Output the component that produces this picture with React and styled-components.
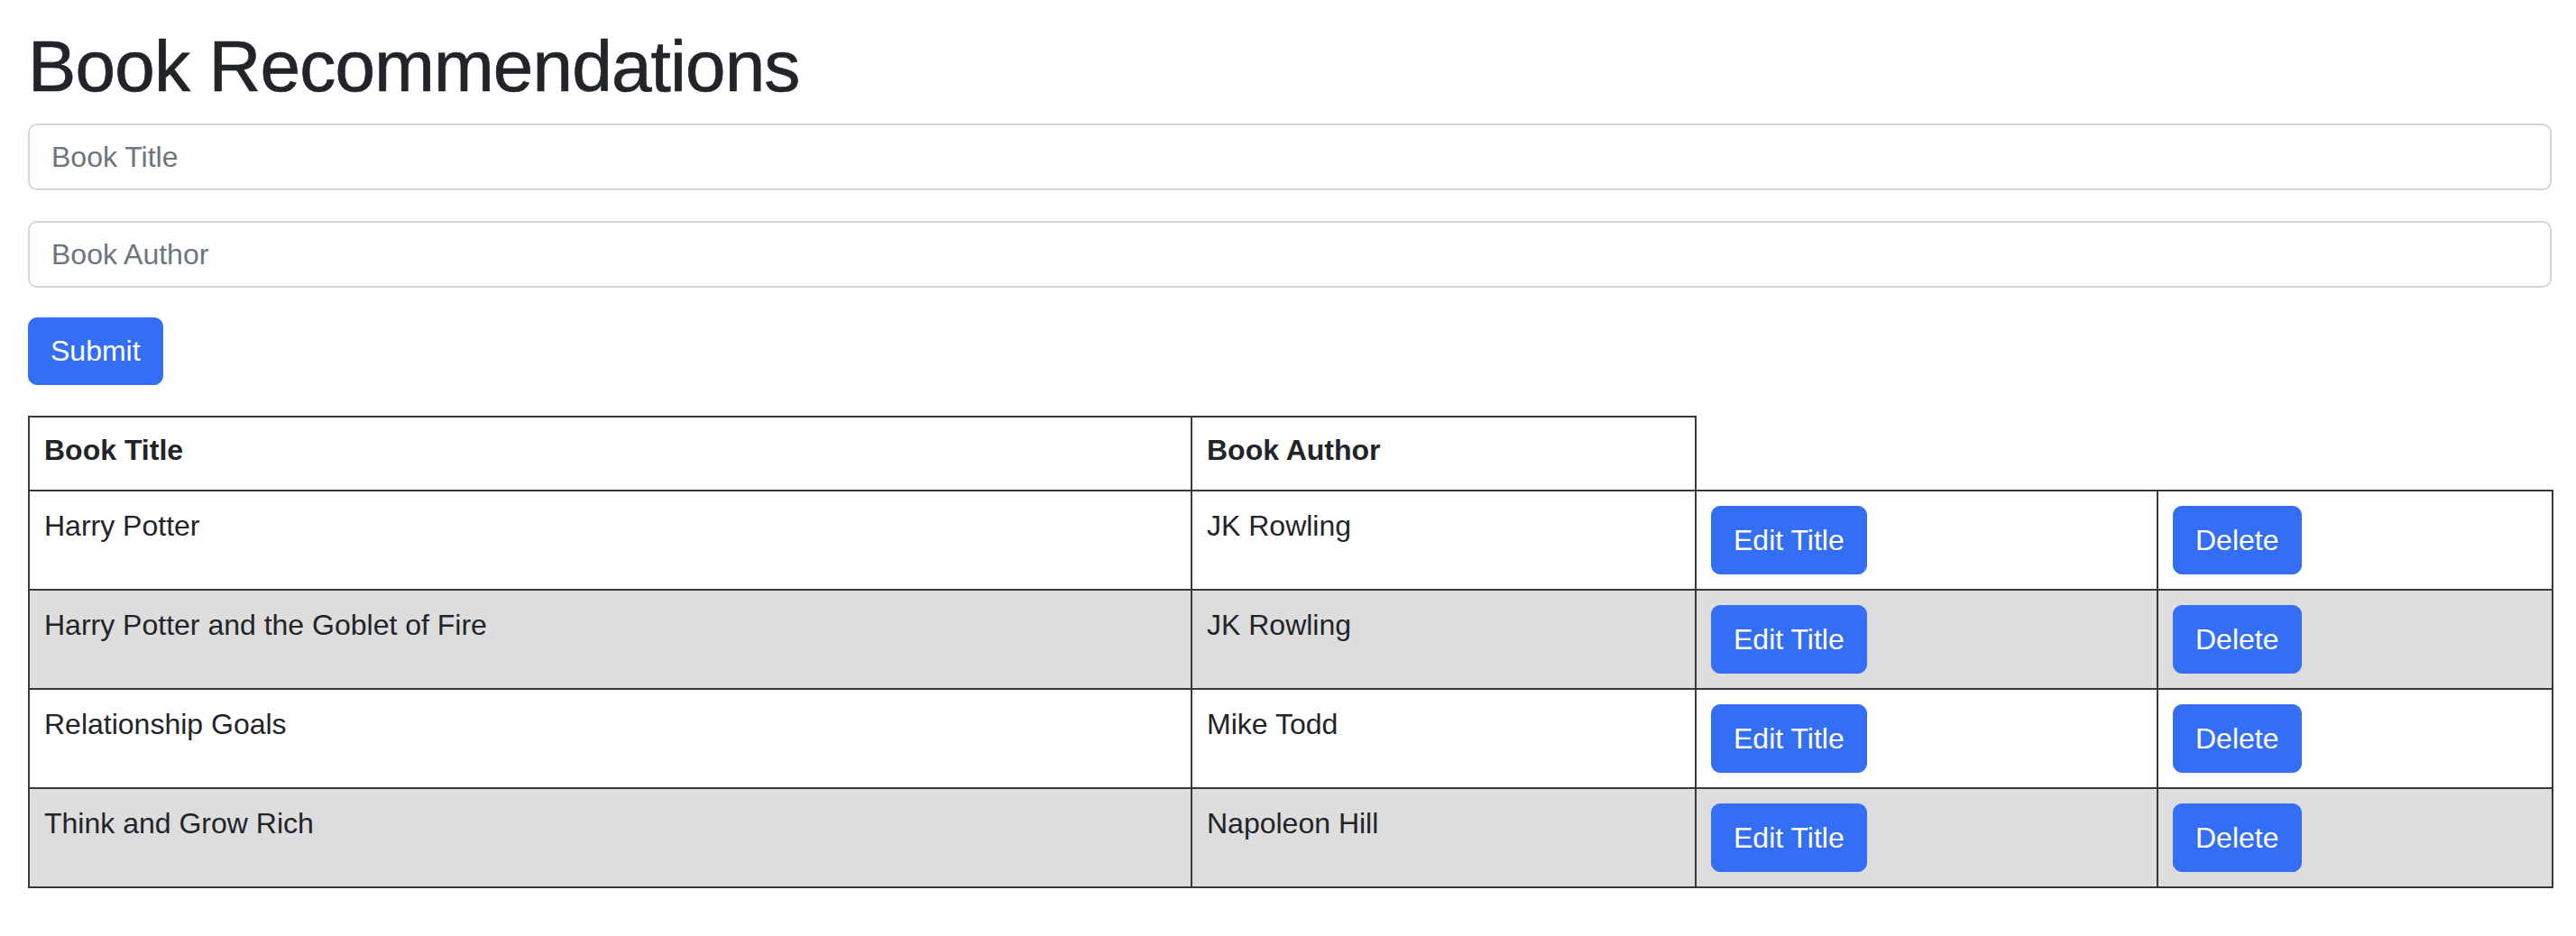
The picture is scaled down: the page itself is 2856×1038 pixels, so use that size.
import React from "react";
import styled, { createGlobalStyle } from "styled-components";

const GlobalStyle = createGlobalStyle`
  body {
    margin: 0;
    background: #fff;
    color: #212529;
    font-family: "Liberation Sans", Arial, sans-serif;
  }
`;

const Page = styled.div`
  padding: 29px 27px 40px 31px;
`;

const Title = styled.h1`
  margin: 0 0 18px;
  font-size: 80px;
  font-weight: 400;
  line-height: 90px;
  letter-spacing: -0.8px;
  -webkit-text-stroke: 0.7px #212529;
  color: #212529;
`;

const Form = styled.form`
  display: flex;
  flex-direction: column;
  align-items: flex-start;
  margin-bottom: 34px;
`;

const Field = styled.input`
  display: block;
  width: 100%;
  height: 74px;
  box-sizing: border-box;
  margin-bottom: ${(p) => p.$gap || 34}px;
  padding: 0 24px;
  border: 2px solid #d3d7dc;
  border-radius: 10px;
  font-family: inherit;
  font-size: 32px;
  color: #212529;
  background: #fff;
  outline: none;

  &::placeholder {
    color: #6c757d;
  }
`;

const Button = styled.button`
  display: inline-flex;
  align-items: center;
  justify-content: center;
  height: ${(p) => p.$h || 76}px;
  box-sizing: border-box;
  padding: 0 24px;
  border: 1px solid #346ef5;
  border-radius: 10px;
  background: #346ef5;
  color: #fff;
  font-family: inherit;
  font-size: 32px;
  cursor: pointer;
`;

const Table = styled.table`
  width: 100%;
  table-layout: fixed;
  border-collapse: collapse;
  font-size: 32px;
  color: #212529;
`;

const Col = styled.col`
  width: ${(p) => p.$w}px;
`;

const Row = styled.tr`
  background: ${(p) => (p.$shade ? "#dddddd" : "#fff")};
`;

const HeadCell = styled.th`
  padding: 16px 16px 24px;
  border: 2px solid #393939;
  text-align: left;
  font-weight: 700;
  line-height: 40px;
  vertical-align: top;
`;

const Cell = styled.td`
  padding: 16px;
  border: 2px solid #393939;
  line-height: 44px;
  vertical-align: top;
  height: 76px;
`;

const books = [
  { title: "Harry Potter", author: "JK Rowling" },
  { title: "Harry Potter and the Goblet of Fire", author: "JK Rowling" },
  { title: "Relationship Goals", author: "Mike Todd" },
  { title: "Think and Grow Rich", author: "Napoleon Hill" },
];

export default function App() {
  return (
    <Page>
      <GlobalStyle />
      <Title>Book Recommendations</Title>
      <Form onSubmit={(e) => e.preventDefault()}>
        <Field placeholder="Book Title" />
        <Field placeholder="Book Author" $gap={33} />
        <Button type="submit" $h={75}>
          Submit
        </Button>
      </Form>
      <Table>
        <colgroup>
          <Col $w={1289} />
          <Col $w={559} />
          <Col $w={512} />
          <Col $w={438} />
        </colgroup>
        <thead>
          <tr>
            <HeadCell>Book Title</HeadCell>
            <HeadCell>Book Author</HeadCell>
          </tr>
        </thead>
        <tbody>
          {books.map((b, i) => (
            <Row key={b.title} $shade={i % 2 === 1}>
              <Cell>{b.title}</Cell>
              <Cell>{b.author}</Cell>
              <Cell>
                <Button>Edit Title</Button>
              </Cell>
              <Cell>
                <Button>Delete</Button>
              </Cell>
            </Row>
          ))}
        </tbody>
      </Table>
    </Page>
  );
}
